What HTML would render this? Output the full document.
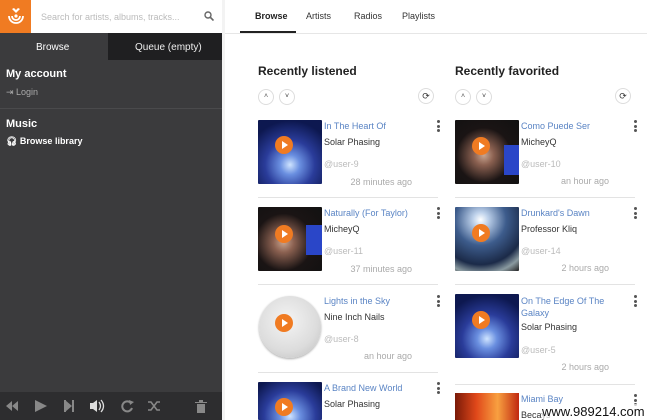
<!DOCTYPE html>
<html style="width:647px;height:420px;overflow:hidden"><head><meta charset="utf-8"><style>
*{margin:0;padding:0;box-sizing:border-box}
body{width:647px;height:420px;overflow:hidden;background:#fff;font-family:"Liberation Sans",sans-serif;position:relative}
.a{position:absolute}
.side{left:0;top:0;width:222px;height:420px;background:#3b3b3d}
.t{font-size:9px;color:#5a84c4;white-space:nowrap}
.ar{font-size:9px;color:#333}
.u{font-size:9px;color:#bbb}
.tm{font-size:9px;color:#aaa;text-align:right;width:110px}
.th{width:64px;height:64px;border-radius:1px}
.pl{width:18px;height:18px;border-radius:50%;background:#f07b22}
.pl:after{content:"";position:absolute;left:7px;top:5px;border-left:6px solid #fff;border-top:4px solid transparent;border-bottom:4px solid transparent}
.dots{width:3px}
.dots i{display:block;width:3px;height:3px;border-radius:50%;background:#555;margin-bottom:1.5px}
.sep{height:1px;background:#e3e3e3;width:180px}
.cb{width:16px;height:16px;border-radius:50%;border:1px solid #ddd;background:#fff}
</style></head><body>
<div class="a side"></div>
<div class="a" style="left:0;top:0;width:31px;height:33px;background:#f07b22"></div>
<svg class="a" style="left:5px;top:7px" width="22" height="20" viewBox="0 0 22 20"><path d="M7 2 L11 6 L15 2 L13 1 L11 3 L9 1Z" fill="#fff"/><path d="M4 9 A7 7 0 0 0 18 9 M7 9 A4 4 0 0 0 15 9" stroke="#fff" stroke-width="1.8" fill="none"/><circle cx="11" cy="9" r="1.6" fill="#fff"/></svg>
<div class="a" style="left:31px;top:0;width:191px;height:33px;background:#fff"></div>
<div class="a" style="left:41px;top:12px;font-size:9px;color:#bbb">Search for artists, albums, tracks...</div>
<svg class="a" style="left:204px;top:11px" width="10" height="10"><circle cx="4" cy="4" r="3" stroke="#666" stroke-width="1.4" fill="none"/><path d="M6.5 6.5 L9.5 9.5" stroke="#666" stroke-width="1.6"/></svg>
<div class="a" style="left:0;top:33px;width:108px;height:27px;background:#3b3b3d"></div>
<div class="a" style="left:108px;top:33px;width:114px;height:27px;background:#1f1f21"></div>
<div class="a" style="left:36px;top:42px;font-size:10px;color:#fff">Browse</div>
<div class="a" style="left:135px;top:42px;font-size:10px;color:#eee">Queue (empty)</div>
<div class="a" style="left:6px;top:68px;font-size:11px;color:#fff;font-weight:bold">My account</div>
<div class="a" style="left:6px;top:87px;font-size:9px;color:#aaa">⇥ Login</div>
<div class="a" style="left:0;top:108px;width:222px;height:1px;background:#4a4a4c"></div>
<div class="a" style="left:6px;top:118px;font-size:11px;color:#fff;font-weight:bold">Music</div>
<div class="a" style="left:6px;top:136px;font-size:9px;color:#fff;font-weight:bold">🎧︎ Browse library</div>
<div class="a" style="left:0;top:392px;width:222px;height:28px;background:#2d2d2f"></div>
<svg class="a" style="left:0;top:392px" width="222" height="28" fill="#888">
<path d="M6 14 L12 9 L12 19Z M12 14 L18 9 L18 19Z"/><path d="M35 8 L47 14 L35 20Z"/><path d="M65 8 L72 14 L65 20Z M72 8 h2 v12 h-2Z M64 8 h2 v12 h-2Z"/>
<path d="M90 11 h3 l4 -3 v12 l-4 -3 h-3Z" fill="#ddd"/><path d="M99 10 q3 4 0 8 M101 8 q5 6 0 12" stroke="#ddd" stroke-width="1.3" fill="none"/>
<path d="M131 11 A5 5 0 1 0 132 16" stroke="#888" stroke-width="2" fill="none"/><path d="M129 8 L134 10 L130 13Z"/>
<path d="M148 10 h3 l6 8 h3 M148 18 h3 l6 -8 h3" stroke="#888" stroke-width="1.6" fill="none"/>
<path d="M195 10 h12 v1 h-12Z M197 12 h8 v9 h-8Z M199 8 h4 v2 h-4Z"/></svg>
<div class="a" style="left:222px;top:0;width:3px;height:420px;background:#f3f3f3"></div>
<div class="a" style="left:225px;top:33px;width:422px;height:1px;background:#e6e6e6"></div>
<div class="a" style="left:255px;top:11px;font-size:9px;color:#222;font-weight:bold">Browse</div>
<div class="a" style="left:306px;top:11px;font-size:9px;color:#333">Artists</div>
<div class="a" style="left:354px;top:11px;font-size:9px;color:#333">Radios</div>
<div class="a" style="left:402px;top:11px;font-size:9px;color:#333">Playlists</div>
<div class="a" style="left:240px;top:31px;width:56px;height:2px;background:#222"></div>

<div class="a" style="left:258px;top:64px;font-size:12px;font-weight:bold;color:#222">Recently listened</div>
<div class="a" style="left:455px;top:64px;font-size:12px;font-weight:bold;color:#222">Recently favorited</div>
<div class="a cb" style="left:258px;top:89px;font-size:7px;text-align:center;line-height:14px;color:#555">˄</div>
<div class="a cb" style="left:279px;top:89px;font-size:7px;text-align:center;line-height:14px;color:#333">˅</div>
<div class="a cb" style="left:418px;top:88px;font-size:9px;text-align:center;line-height:14px;color:#333">⟳</div>
<div class="a cb" style="left:455px;top:89px;font-size:7px;text-align:center;line-height:14px;color:#555">˄</div>
<div class="a cb" style="left:476px;top:89px;font-size:7px;text-align:center;line-height:14px;color:#333">˅</div>
<div class="a cb" style="left:615px;top:88px;font-size:9px;text-align:center;line-height:14px;color:#333">⟳</div>

<div class="a th" style="left:258px;top:120px;background:radial-gradient(circle at 50% 70%,#cfe4ff 0,#6a8fe0 18%,#2a3c9a 45%,#0d1850 80%)"></div>
<div class="a pl" style="left:275px;top:136px"></div>
<div class="a t" style="left:324px;top:121px">In The Heart Of</div>
<div class="a ar" style="left:324px;top:137px">Solar Phasing</div>
<div class="a u" style="left:324px;top:159px">@user-9</div>
<div class="a tm" style="left:302px;top:177px">28 minutes ago</div>
<div class="a dots" style="left:437px;top:120px"><i></i><i></i><i></i></div>
<div class="a sep" style="left:258px;top:197px"></div>

<div class="a th" style="left:258px;top:207px;background:radial-gradient(circle at 40% 55%,#c9a590 0,#8a6050 20%,#1a1414 55%,#111 100%)"></div>
<div class="a" style="left:306px;top:225px;width:16px;height:30px;background:#2a46c8"></div>
<div class="a pl" style="left:275px;top:225px"></div>
<div class="a t" style="left:324px;top:208px">Naturally (For Taylor)</div>
<div class="a ar" style="left:324px;top:224px">MicheyQ</div>
<div class="a u" style="left:324px;top:246px">@user-11</div>
<div class="a tm" style="left:302px;top:264px">37 minutes ago</div>
<div class="a dots" style="left:437px;top:207px"><i></i><i></i><i></i></div>
<div class="a sep" style="left:258px;top:284px"></div>

<div class="a" style="left:259px;top:296px;width:62px;height:62px;border-radius:50%;background:radial-gradient(circle at 45% 40%,#f4f4f4 0,#dcdcdc 60%,#bbb 100%);box-shadow:0 1px 2px #aaa"></div>
<div class="a pl" style="left:275px;top:314px"></div>
<div class="a t" style="left:324px;top:296px">Lights in the Sky</div>
<div class="a ar" style="left:324px;top:312px">Nine Inch Nails</div>
<div class="a u" style="left:324px;top:334px">@user-8</div>
<div class="a tm" style="left:302px;top:351px">an hour ago</div>
<div class="a dots" style="left:437px;top:295px"><i></i><i></i><i></i></div>
<div class="a sep" style="left:258px;top:372px"></div>

<div class="a th" style="left:258px;top:382px;height:38px;background:radial-gradient(circle at 50% 90%,#cfe4ff 0,#6a8fe0 22%,#2a3c9a 55%,#0d1850 90%)"></div>
<div class="a pl" style="left:275px;top:398px"></div>
<div class="a t" style="left:324px;top:383px">A Brand New World</div>
<div class="a ar" style="left:324px;top:399px">Solar Phasing</div>
<div class="a dots" style="left:437px;top:382px"><i></i><i></i><i></i></div>

<div class="a th" style="left:455px;top:120px;background:radial-gradient(circle at 45% 55%,#c9a590 0,#8a6050 20%,#1a1414 55%,#111 100%)"></div>
<div class="a" style="left:504px;top:145px;width:15px;height:30px;background:#2a46c8"></div>
<div class="a pl" style="left:472px;top:137px"></div>
<div class="a t" style="left:521px;top:121px">Como Puede Ser</div>
<div class="a ar" style="left:521px;top:137px">MicheyQ</div>
<div class="a u" style="left:521px;top:159px">@user-10</div>
<div class="a tm" style="left:499px;top:176px">an hour ago</div>
<div class="a dots" style="left:634px;top:120px"><i></i><i></i><i></i></div>
<div class="a sep" style="left:455px;top:197px"></div>

<div class="a th" style="left:455px;top:207px;background:radial-gradient(circle at 40% 20%,#fff 0,#bcd0ea 12%,#3d5c8c 40%,#1b2a48 70%,#8a9aa0 85%,#222 100%)"></div>
<div class="a pl" style="left:472px;top:224px"></div>
<div class="a t" style="left:521px;top:208px">Drunkard's Dawn</div>
<div class="a ar" style="left:521px;top:224px">Professor Kliq</div>
<div class="a u" style="left:521px;top:246px">@user-14</div>
<div class="a tm" style="left:499px;top:263px">2 hours ago</div>
<div class="a dots" style="left:634px;top:207px"><i></i><i></i><i></i></div>
<div class="a sep" style="left:455px;top:284px"></div>

<div class="a th" style="left:455px;top:294px;background:radial-gradient(circle at 50% 70%,#cfe4ff 0,#6a8fe0 18%,#2a3c9a 45%,#0d1850 80%)"></div>
<div class="a pl" style="left:472px;top:311px"></div>
<div class="a t" style="left:521px;top:295px;line-height:12px">On The Edge Of The<br>Galaxy</div>
<div class="a ar" style="left:521px;top:322px">Solar Phasing</div>
<div class="a u" style="left:521px;top:345px">@user-5</div>
<div class="a tm" style="left:499px;top:362px">2 hours ago</div>
<div class="a dots" style="left:634px;top:295px"><i></i><i></i><i></i></div>
<div class="a sep" style="left:455px;top:384px"></div>

<div class="a" style="left:455px;top:393px;width:64px;height:27px;background:linear-gradient(90deg,#7a1a08,#e0481a,#f8a040,#c02810)"></div>
<div class="a t" style="left:521px;top:394px">Miami Bay</div>
<div class="a ar" style="left:521px;top:410px">Becays</div>
<div class="a dots" style="left:634px;top:394px"><i></i><i></i><i></i></div>
<div class="a" style="left:542px;top:404px;font-size:13px;color:#111;background:rgba(255,255,255,.7)">www.989214.com</div>
</body></html>
